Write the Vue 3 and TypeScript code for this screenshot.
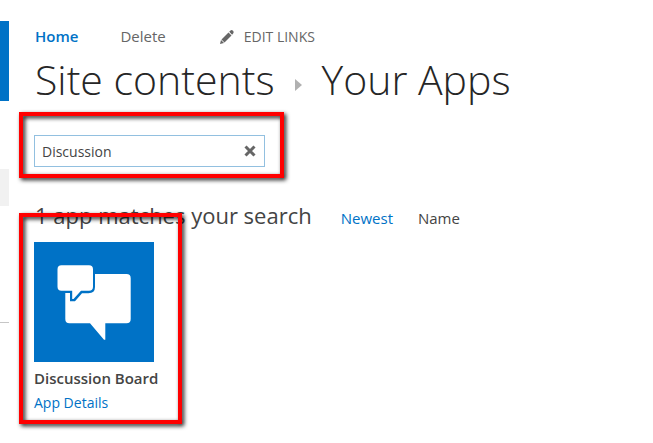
<script setup lang="ts">
import { computed, ref } from 'vue'

interface AppTile {
  id: number
  name: string
}

type SortKey = 'Newest' | 'Name'

const apps: AppTile[] = [{ id: 1, name: 'Discussion Board' }]
const sortKeys: SortKey[] = ['Newest', 'Name']

const query = ref('Discussion')
const sortBy = ref<SortKey>('Newest')

const matches = computed(() =>
  apps.filter((app) => app.name.toLowerCase().includes(query.value.trim().toLowerCase())),
)
const summary = computed(() =>
  matches.value.length === 1
    ? '1 app matches your search'
    : `${matches.value.length} apps match your search`,
)
</script>

<template>
  <div class="page">
    <aside class="rail">
      <div class="rail-logo"></div>
      <div class="rail-selected"></div>
      <div class="rail-divider"></div>
    </aside>

    <main class="content">
      <nav class="top-nav">
        <a class="nav-link current" href="#">Home</a>
        <a class="nav-link" href="#">Delete</a>
        <button class="edit-links" type="button">
          <svg class="pencil" viewBox="0 0 16 16" aria-hidden="true">
            <path d="M1 15l1-4 3 3z" />
            <path d="M2.500 10.500l7-7 3 3-7 7z" />
            <path d="M10.200 2.800l1.300-1.300q1.200-1 2.500.200t.300 2.600l-1.200 1.400z" />
          </svg>
          <span>EDIT LINKS</span>
        </button>
      </nav>

      <h1 class="title">
        <span>Site contents</span>
        <svg class="arrow" viewBox="0 0 7 12" aria-hidden="true"><path d="M0 0l7 6-7 6z" /></svg>
        <span>Your Apps</span>
      </h1>

      <form class="search" role="search" @submit.prevent>
        <input v-model="query" class="search-input" type="text" aria-label="Find an app" />
        <button class="clear" type="button" aria-label="Clear search" @click="query = ''">
          <svg viewBox="0 0 12 12" aria-hidden="true"><path d="M1.500 1.500l9 9M10.500 1.500l-9 9" /></svg>
        </button>
        <span class="callout callout-search"></span>
      </form>

      <div class="results-bar">
        <h2 class="summary">{{ summary }}</h2>
        <button
          v-for="key in sortKeys"
          :key="key"
          type="button"
          class="sort"
          :class="{ active: sortBy === key }"
          @click="sortBy = key"
        >
          {{ key }}
        </button>
      </div>

      <section class="tiles">
        <article v-for="app in matches" :key="app.id" class="tile">
          <svg class="tile-icon" viewBox="0 0 120 120" aria-hidden="true">
            <rect class="tile-bg" width="120" height="120" />
            <path
              class="bubble"
              d="M61 32H92.500q4.200 0 4.200 4.200V77q0 4.300-4.200 4.300H71.300V97.700H70L56 81.300H35.500q-4.200 0-4.200-4.300V51H36V59.200H41L48 51.200H54.500q6.500 0 6.500-6.200z"
            />
            <path
              class="bubble"
              d="M27.500 23.300H55q4 0 4 4V44.700q0 4-4 4H47L39.500 57H38.200V48.700H27.500q-4 0-4-4V27.300q0-4 4-4z"
            />
          </svg>
          <h3 class="tile-name">{{ app.name }}</h3>
          <a class="tile-details" href="#">App Details</a>
          <span class="callout callout-tile"></span>
        </article>
      </section>
    </main>
  </div>
</template>

<style>
body {
  margin: 0;
  background: #fff;
}
</style>

<style scoped>
.page {
  display: flex;
  gap: 25px;
  padding: 21px 0 30px;
  font-family: 'Open Sans', 'Noto Sans', sans-serif;
  font-size: 14px;
  line-height: 20px;
  color: #444;
}

button {
  margin: 0;
  padding: 0;
  border: 0;
  background: none;
  font: inherit;
  color: inherit;
  cursor: pointer;
}

a {
  color: #0072c6;
  text-decoration: none;
}

.rail {
  flex: 0 0 9px;
}

.rail-logo {
  height: 80px;
  background: #0072c6;
}

.rail-selected {
  height: 37px;
  margin-top: 68px;
  background: #f1f1f1;
}

.rail-divider {
  margin-top: 116px;
  border-top: 1px solid #c6c6c6;
}

.content {
  flex: 1;
  min-width: 0;
  padding-top: 5px;
}

.top-nav {
  display: flex;
  align-items: flex-start;
  gap: 42px;
  padding-left: 1px;
}

.nav-link {
  font-size: 15px;
  color: #666;
}

.nav-link.current {
  color: #0072c6;
  font-weight: 600;
}

.edit-links {
  display: flex;
  align-items: center;
  gap: 9px;
  padding: 1px 0 0 11px;
  color: #666;
}

.pencil {
  width: 16px;
  height: 16px;
  fill: #666;
}

.title {
  display: flex;
  align-items: center;
  gap: 20px;
  margin: 2px 0 0;
  padding-left: 1px;
  font-size: 41px;
  font-weight: 300;
  line-height: 60px;
  color: #262626;
  white-space: nowrap;
}

.arrow {
  width: 7px;
  height: 12px;
  margin-top: 12px;
  fill: #b1b1b1;
}

.search {
  position: relative;
  display: flex;
  align-items: center;
  box-sizing: border-box;
  width: 231px;
  height: 32px;
  margin-top: 26px;
  border: 1px solid #92c0e0;
}

.search-input {
  flex: 1;
  min-width: 0;
  padding: 1px 7px 0;
  border: 0;
  outline: 0;
  background: none;
  font: inherit;
  color: #444;
}

.clear {
  display: flex;
  padding: 0 8px;
}

.clear svg {
  width: 12px;
  height: 12px;
  fill: none;
  stroke: #666;
  stroke-width: 3;
}

.results-bar {
  display: flex;
  align-items: baseline;
  gap: 25px;
  height: 32px;
  margin-top: 32px;
  white-space: nowrap;
}

.summary {
  margin: 0;
  padding: 0 4px 0 1px;
  font-size: 22px;
  font-weight: 400;
  line-height: 32px;
}

.sort {
  font-size: 15px;
}

.sort.active {
  color: #0072c6;
}

.tiles {
  display: flex;
  margin-top: 11px;
}

.tile {
  position: relative;
}

.tile-icon {
  display: block;
  width: 120px;
  height: 120px;
}

.tile-bg {
  fill: #0072c6;
}

.bubble {
  fill: #fff;
}

.tile-name {
  margin: 6px 0 5px;
  font-size: 15px;
  font-weight: 600;
  line-height: 20px;
}

.tile-details {
  display: block;
}

.callout {
  position: absolute;
  border: 4px solid #f00;
  filter: drop-shadow(2px 2px 2px rgba(0, 0, 0, 0.9));
  pointer-events: none;
}

.callout-search {
  inset: -24px -20px -12px -16px;
}

.callout-tile {
  inset: -29px -24px -11px -15px;
}
</style>
